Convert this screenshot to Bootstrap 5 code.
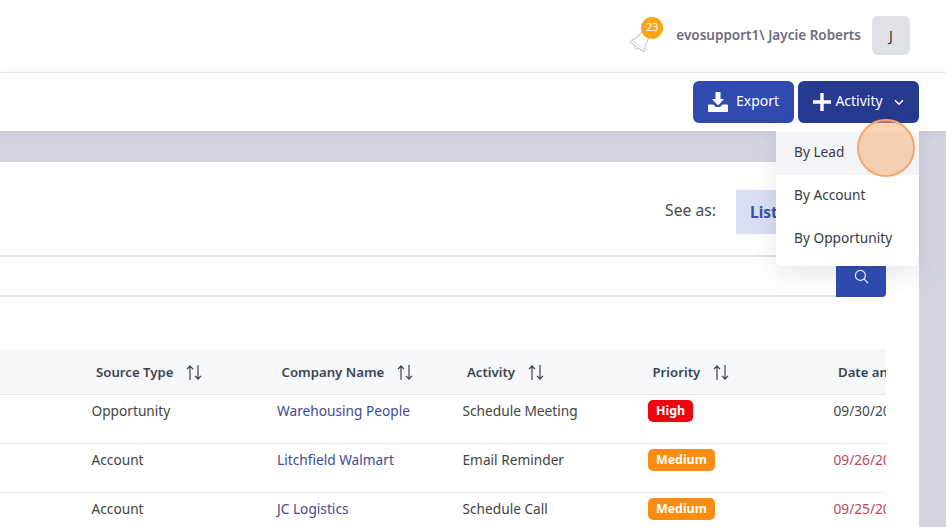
<!DOCTYPE html>
<html lang="en">
<head>
<meta charset="utf-8">
<title>Activities</title>
<link href="https://cdn.jsdelivr.net/npm/bootstrap@5.3.0/dist/css/bootstrap.min.css" rel="stylesheet">
<style>
html,body{height:100%;overflow:hidden}
body{font-family:"Noto Sans","Open Sans","Liberation Sans",sans-serif;background:#d3d4e0;color:#333;font-size:13.7px}
.top-head{height:73px;background:#fff;border-bottom:1px solid #e9e9ec;padding:0 36px 2px 0}
.user-name{color:#6f6b80;font-weight:600;font-size:13.5px;margin:0 11px 0 13px}
.avatar-box{width:38px;height:39px;background:#dee2e6;border-radius:6px;color:#333;font-size:14px}
.bell-wrap{width:34px;height:36px}
.bell-count{top:0;right:0;width:22px;height:22px;border-radius:50%;background:#f9a70f;color:#fff;font-size:10.5px}
.tool-bar{height:58px;background:#fff;padding:8px 27px 8px 0;position:relative;box-shadow:0 1px 10px rgba(40,40,70,.08)}
.act-btn{height:42px;border:0;border-radius:6px;color:#fff;font-size:14px;font-weight:400;padding:0}
.act-btn:hover,.act-btn:focus{color:#fff}
.btn-word{margin-top:-3px}
.exp-btn{width:101px;background:#2f4bb0;margin-right:4px}
.add-btn{width:121px;background:#273a90}
.chev-mark{margin-left:11px}
.menu-pop{top:43px;right:0;left:auto;width:143px;min-width:0;height:142px;padding:8px 0 0;border:0;border-radius:6px;box-shadow:0 8px 24px rgba(60,60,90,.12);font-size:13.7px;margin:0}
.menu-pop .dropdown-item{height:43px;display:flex;align-items:center;padding:0 18px 2px;color:#3a3a44}
.menu-pop .dropdown-item.active{background:#f3f4f8;color:#3a3a44}
.click-spot{width:58px;height:58px;right:4px;top:38px;border-radius:50%;background:rgba(247,176,120,.55);border:2px solid #f4a66c;z-index:1100}
.body-wrap{padding:31px 27px 0 0}
.main-panel{background:#fff;height:365px}
.see-row{height:93px;padding:28px 0 0 0}
.see-label{font-size:15.7px;color:#4a4a4a;margin:9px 20px 0 0}
.list-tab{width:140px;height:44px;background:#d9def2;color:#3a4ea5;font-weight:700;font-size:15.5px;padding:2px 14px 0;margin-right:43px}
.search-row{height:42px;border-top:2px solid #e2e2e4;border-bottom:2px solid #e2e2e4;margin-right:33px}
.search-go{width:50px;height:42px;margin:-2px 0;background:#2f4bb0;border-radius:0 0 4px 0;color:#fff;padding-top:14px}
.table-clip{margin:53px 33px 0 0;overflow:hidden}
.data-grid{table-layout:fixed;width:1007.5px;margin:0;font-size:13.7px}
.data-grid th{height:44px;background:#f7f8fa;border-top:1px solid #eef0f2;border-bottom:1px solid #e4e6ea;padding:0 16px;vertical-align:middle;font-weight:600;color:#3a4450;font-size:13.2px;white-space:nowrap}
.data-grid td{height:49px;padding:6px 11.5px 0;vertical-align:top;border-bottom:1px solid #eceef0;color:#444;white-space:nowrap}
.data-grid td.late-date{color:#b8485a}
.data-grid .lead-col{width:80px}
.data-grid .data-col{width:185.5px}
.sort-mark{margin-left:9px;vertical-align:-3px}
.co-link{color:#3f4a97;text-decoration:none}
.pri-tag{display:inline-block;height:22px;line-height:22px;padding:0 8px;border-radius:5px;color:#fff;font-weight:700;font-size:12.4px;margin-top:-1px;vertical-align:top}
.pri-high{background:#ee0510}
.pri-med{background:#fb8e12}
</style>
</head>
<body>
<header class="top-head d-flex align-items-center justify-content-end">
  <div class="bell-wrap position-relative d-flex align-items-end">
    <svg width="24" height="24" viewBox="0 0 24 24" fill="#fff" stroke="#c9c9cd" stroke-width="1" stroke-linejoin="round"><g transform="rotate(35 12 12)"><path d="M12 2c-3.200 0-5 2.600-5 6 0 4.500-1.500 6.500-3.500 9h17c-2-2.500-3.500-4.500-3.500-9 0-3.400-1.800-6-5-6z"/><path d="M3.500 17v2.200h17V17"/><path d="M10 19.200a2 2 0 0 0 4 0"/></g></svg>
    <span class="bell-count position-absolute d-flex align-items-center justify-content-center">23</span>
  </div>
  <span class="user-name">evosupport1\ Jaycie Roberts</span>
  <div class="avatar-box d-flex align-items-center justify-content-center">J</div>
</header>
<div class="tool-bar d-flex justify-content-end">
  <button type="button" class="btn act-btn exp-btn d-flex align-items-center justify-content-center gap-2">
    <svg width="20" height="20" viewBox="0 0 20 20" fill="#fff"><path d="M7.500 0h5v7h3.500L10 13.500 4 7h3.500z"/><path d="M1 12.500h4.500L8 15h4l2.500-2.500H19a1 1 0 0 1 1 1V19a1 1 0 0 1-1 1H1a1 1 0 0 1-1-1v-5.500a1 1 0 0 1 1-1z"/></svg>
    <span class="btn-word">Export</span>
  </button>
  <div class="position-relative">
    <button type="button" class="btn act-btn add-btn d-flex align-items-center justify-content-center">
      <svg width="18" height="18" viewBox="0 0 18 18" fill="#fff" class="me-1"><path d="M7.300 0h3.400v7.300H18v3.400h-7.300V18H7.300v-7.300H0V7.300h7.300z"/></svg>
      <span class="btn-word">Activity</span>
      <svg width="10" height="7" viewBox="0 0 10 7" fill="none" stroke="#fff" stroke-width="1.500" class="chev-mark"><path d="M1 1.200l4 4 4-4"/></svg>
    </button>
    <ul class="dropdown-menu show menu-pop position-absolute">
      <li><a class="dropdown-item active" href="#">By Lead</a></li>
      <li><a class="dropdown-item" href="#">By Account</a></li>
      <li><a class="dropdown-item" href="#">By Opportunity</a></li>
    </ul>
    <span class="click-spot position-absolute"></span>
  </div>
</div>
<div class="body-wrap">
  <main class="main-panel">
    <div class="see-row d-flex justify-content-end align-items-start">
      <span class="see-label">See as:</span>
      <div class="list-tab d-flex align-items-center">List</div>
    </div>
    <div class="search-row d-flex justify-content-end">
      <div class="search-go d-flex justify-content-center">
        <svg width="15" height="15" viewBox="0 0 16 16" fill="none" stroke="#fff" stroke-width="1.200"><circle cx="6.800" cy="6.800" r="5.300"/><path d="M10.800 10.800l4.200 4.200"/></svg>
      </div>
    </div>
    <div class="table-clip">
      <table class="table data-grid">
        <thead>
          <tr>
            <th class="lead-col"></th>
            <th class="data-col">Source Type <svg class="sort-mark" width="16" height="15" viewBox="0 0 16 15" fill="none" stroke="#3a4450" stroke-width="1.200"><path d="M4 15V1M1 4.200L4 1l3 3.200M12 0v14M9 10.800l3 3.200 3-3.200"/></svg></th>
            <th class="data-col">Company Name <svg class="sort-mark" width="16" height="15" viewBox="0 0 16 15" fill="none" stroke="#3a4450" stroke-width="1.200"><path d="M4 15V1M1 4.200L4 1l3 3.200M12 0v14M9 10.800l3 3.200 3-3.200"/></svg></th>
            <th class="data-col">Activity <svg class="sort-mark" width="16" height="15" viewBox="0 0 16 15" fill="none" stroke="#3a4450" stroke-width="1.200"><path d="M4 15V1M1 4.200L4 1l3 3.200M12 0v14M9 10.800l3 3.200 3-3.200"/></svg></th>
            <th class="data-col">Priority <svg class="sort-mark" width="16" height="15" viewBox="0 0 16 15" fill="none" stroke="#3a4450" stroke-width="1.200"><path d="M4 15V1M1 4.200L4 1l3 3.200M12 0v14M9 10.800l3 3.200 3-3.200"/></svg></th>
            <th class="data-col">Date and Time</th>
          </tr>
        </thead>
        <tbody>
          <tr><td></td><td>Opportunity</td><td><a class="co-link" href="#">Warehousing People</a></td><td>Schedule Meeting</td><td><span class="pri-tag pri-high">High</span></td><td>09/30/2024</td></tr>
          <tr><td></td><td>Account</td><td><a class="co-link" href="#">Litchfield Walmart</a></td><td>Email Reminder</td><td><span class="pri-tag pri-med">Medium</span></td><td class="late-date">09/26/2024</td></tr>
          <tr><td></td><td>Account</td><td><a class="co-link" href="#">JC Logistics</a></td><td>Schedule Call</td><td><span class="pri-tag pri-med">Medium</span></td><td class="late-date">09/25/2024</td></tr>
        </tbody>
      </table>
    </div>
  </main>
</div>
<script src="https://cdn.jsdelivr.net/npm/bootstrap@5.3.0/dist/js/bootstrap.bundle.min.js"></script>
</body>
</html>
